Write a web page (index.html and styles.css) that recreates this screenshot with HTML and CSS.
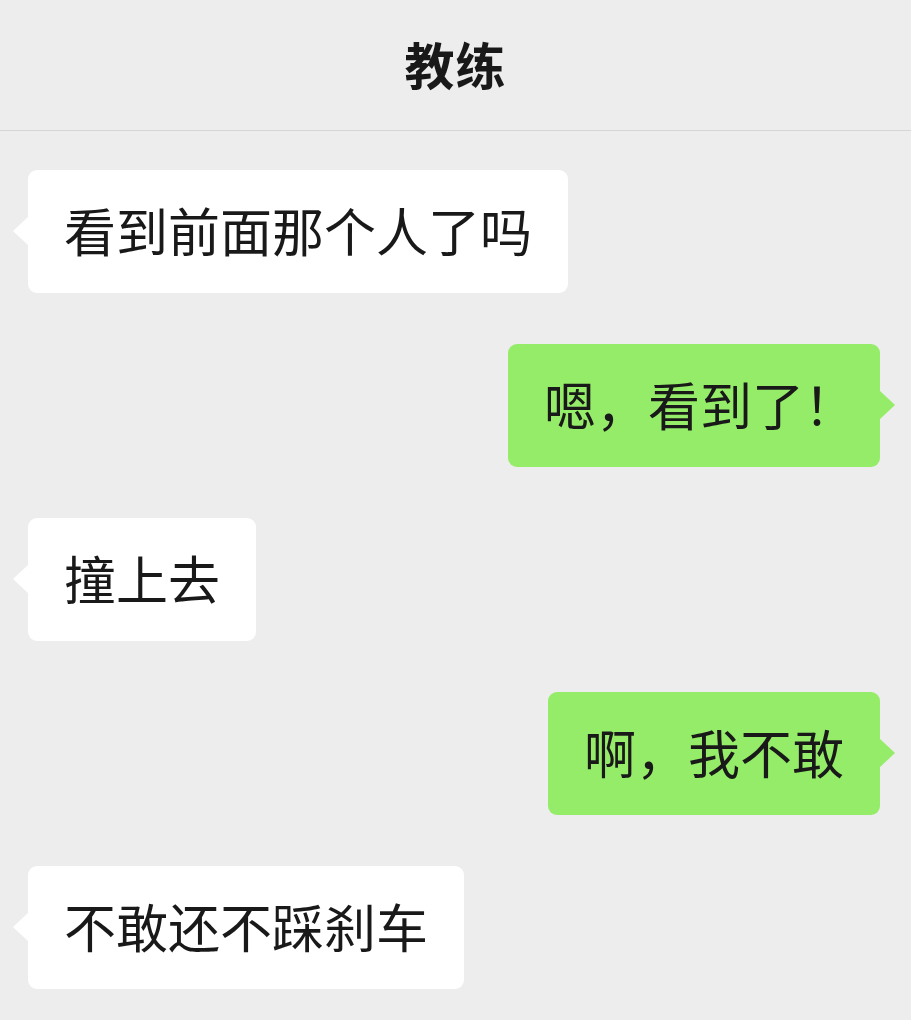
FILE: index.html
```html
<!DOCTYPE html>
<html lang="zh-CN">
<head>
  <meta charset="UTF-8" />
  <meta name="viewport" content="width=device-width, initial-scale=1.0"/>
  <title>教练</title>
  <link rel="stylesheet" href="styles.css">
</head>
<body>
  <header class="topbar">
    <h1 class="title">教练</h1>
  </header>

  <main class="chat">
    <div class="msg left">看到前面那个人了吗</div>
    <div class="msg right">嗯，看到了<span class="bang">！</span></div>
    <div class="msg left">撞上去</div>
    <div class="msg right">啊，我不敢</div>
    <div class="msg left">不敢还不踩刹车</div>
  </main>
</body>
</html>
```

FILE: styles.css
```css
:root {
  --bg: #ededed;
  --line: #d6d6d6;
  --text: #191919;
  --white: #ffffff;
  --green: #95ec69;
  --radius: 9px;
}

* {
  box-sizing: border-box;
}

body {
  margin: 0;
  background: var(--bg);
  color: var(--text);
  font-family: "Noto Sans CJK SC", "Noto Sans", sans-serif;
  min-height: 100vh;
}

.topbar {
  height: 131px;
  border-bottom: 1px solid var(--line);
  display: flex;
  align-items: center;
  justify-content: center;
}

.title {
  margin: 0 0 4px;
  font-size: 50px;
  font-weight: 700;
  letter-spacing: 1px;
}

.chat {
  display: flex;
  flex-direction: column;
  gap: 51px;
  padding: 39px 31px 0 28px;
}

.msg {
  position: relative;
  font-size: 52px;
  line-height: 61px;
  padding: 29px 36px 33px;
  border-radius: var(--radius);
  white-space: nowrap;
}

.msg::before {
  content: "";
  position: absolute;
  top: 46px;
  border-top: 15px solid transparent;
  border-bottom: 15px solid transparent;
}

.left {
  align-self: flex-start;
  background: var(--white);
}

.left::before {
  left: -15px;
  border-right: 16px solid var(--white);
}

.right {
  align-self: flex-end;
  background: var(--green);
}

.right::before {
  right: -15px;
  border-left: 16px solid var(--green);
}

.bang {
  letter-spacing: -12px;
}
```
